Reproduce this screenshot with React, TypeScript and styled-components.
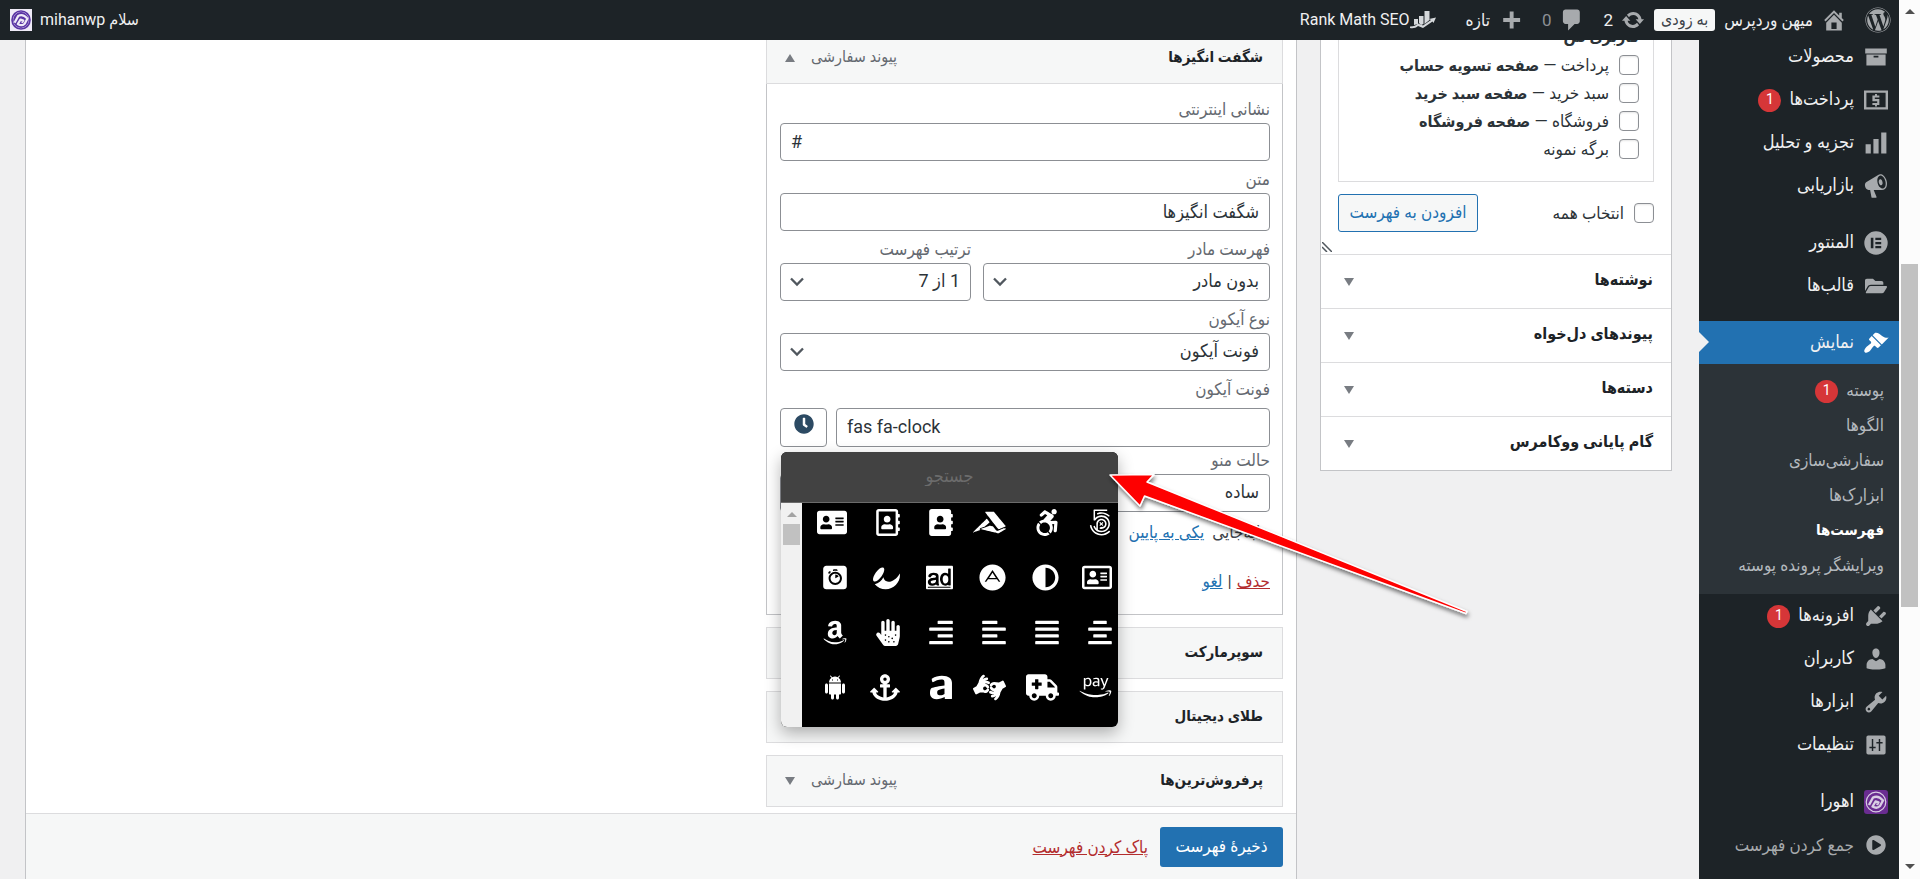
import React from 'react';
import styled, { createGlobalStyle, css } from 'styled-components';
import {
  Fa500Px, FaAccessibleIcon, FaAccusoft, FaAddressBook, FaRegAddressBook, FaAddressCard,
  FaRegAddressCard, FaAdjust, FaAdn, FaAdversal, FaAffiliatetheme, FaAlgolia,
  FaAlignCenter, FaAlignJustify, FaAlignLeft, FaAlignRight, FaAllergies, FaAmazon,
  FaAmazonPay, FaAmbulance, FaAmericanSignLanguageInterpreting, FaAmilia, FaAnchor,
  FaClock, FaFolderOpen, FaPlayCircle, FaWordpress,
} from 'react-icons/fa';

const GlobalStyle = createGlobalStyle`
  *, *::before, *::after { box-sizing: border-box; }
  body {
    margin: 0;
    background: #f0f0f1;
    color: #3c434a;
    font-family: Roboto, 'DejaVu Sans Condensed', sans-serif;
    font-size: 17px;
    line-height: 24px;
  }
  button, input, select { font: inherit; color: inherit; margin: 0; }
  ul { list-style: none; margin: 0; padding: 0; }
  h3, h4, p { margin: 0; font-size: inherit; }
  b { font-size: 16px; }
`;

/* ---------- shell ---------- */

const Shell = styled.div`
  display: flex;
  direction: rtl;
  height: 100vh;
  overflow: hidden;
`;

const Page = styled.div`
  flex: 1;
  min-width: 0;
  display: flex;
  flex-direction: column;
  position: relative;
`;

const Columns = styled.div`
  flex: 1;
  min-height: 0;
  display: flex;
  overflow: hidden;
`;

const Track = styled.div`
  width: 21px;
  flex: none;
  display: flex;
  flex-direction: column;
  align-items: center;
  justify-content: space-between;
  padding: 9px 0 10px;
  background: #fcfcfc;
`;

const Thumb = styled.div`
  width: 17px;
  height: 343px;
  background: #c1c1c1;
`;

const TrackTop = styled.div`
  display: flex;
  flex-direction: column;
  align-items: center;
  gap: 250px;
`;

const Triangle = styled.span<{ $up?: boolean; $color?: string }>`
  width: 0;
  height: 0;
  border: 5px solid transparent;
  ${({ $up, $color = '#787c82' }) => ($up
    ? css`border-top: 0; border-bottom: 8px solid ${$color};`
    : css`border-bottom: 0; border-top: 8px solid ${$color};`)}
`;

const SmallTriangle = styled(Triangle)`
  border-top-width: ${({ $up }) => ($up ? 0 : 5)}px;
  border-bottom-width: ${({ $up }) => ($up ? 5 : 0)}px;
`;

/* ---------- admin bar ---------- */

const Bar = styled.header`
  height: 40px;
  flex: none;
  display: flex;
  align-items: center;
  justify-content: space-between;
  padding: 0 8px 0 10px;
  background: #1d2327;
  color: #f0f0f1;
  z-index: 3;
`;

const BarGroup = styled.nav`
  display: flex;
  align-items: center;
  gap: 18px;
`;

const BarLink = styled.a<{ $muted?: boolean; $gap?: number; $small?: boolean }>`
  display: flex;
  align-items: center;
  gap: ${({ $gap = 8 }) => $gap}px;
  color: ${({ $muted }) => ($muted ? '#8c8f94' : '#f0f0f1')};
  font-size: ${({ $small }) => ($small ? 16 : 17)}px;
  text-decoration: none;
  white-space: nowrap;
  svg { color: #a7aaad; }
`;

const SiteGroup = styled.div`
  display: flex;
  align-items: center;
  gap: 9px;
`;

const Soon = styled.a`
  padding: 0 7px;
  line-height: 22px;
  border-radius: 3px;
  background: #f6f7f7;
  color: #3c434a;
  font-size: 16px;
  text-decoration: none;
`;

/* ---------- side menu ---------- */

const Side = styled.aside`
  width: 200px;
  flex: none;
  overflow: hidden;
  background: #1d2327;
`;

const SideList = styled.ul`
  margin-top: -5px;
`;

const SideGap = styled.li`
  height: 14px;
`;

const SideLink = styled.a<{ $active?: boolean; $muted?: boolean }>`
  position: relative;
  display: flex;
  align-items: center;
  gap: 9px;
  height: 43px;
  padding-right: 10px;
  color: ${({ $muted }) => ($muted ? '#a7aaad' : '#f0f0f1')};
  background: ${({ $active }) => ($active ? '#2271b1' : 'transparent')};
  font-size: ${({ $muted }) => ($muted ? 17 : 18)}px;
  text-decoration: none;
  svg { color: ${({ $active }) => ($active ? '#fff' : '#a7aaad')}; }
  ${({ $active }) => $active && css`
    &::after {
      content: '';
      position: absolute;
      left: 0;
      top: 11px;
      border: 10px solid transparent;
      border-right: 0;
      border-left-color: #f0f0f1;
    }
  `}
`;

const IconSlot = styled.span`
  width: 26px;
  display: flex;
  justify-content: center;
`;

const SideText = styled.span`
  display: flex;
  align-items: center;
  gap: 8px;
  padding-bottom: 2px;
`;

const Badge = styled.span`
  width: 23px;
  height: 23px;
  margin-top: 3px;
  border-radius: 50%;
  background: #d63638;
  color: #fff;
  font-size: 14px;
  line-height: 21px;
  text-align: center;
`;

const SubMenu = styled.ul`
  padding: 8px 0 12px;
  background: #2c3338;
`;

const SubLink = styled.a<{ $current?: boolean }>`
  display: flex;
  align-items: center;
  gap: 8px;
  height: 35px;
  padding-right: 15px;
  color: ${({ $current }) => ($current ? '#fff' : '#b4b9be')};
  font-size: ${({ $current }) => ($current ? 15 : 17)}px;
  font-weight: ${({ $current }) => ($current ? 700 : 400)};
  text-decoration: none;
  white-space: nowrap;
`;

/* ---------- meta boxes ---------- */

const Content = styled.main`
  flex: 1;
  min-width: 0;
  display: flex;
  align-items: stretch;
  gap: 23px;
  padding: 0 27px 0 25px;
`;

const MetaColumn = styled.section`
  width: 352px;
  flex: none;
  align-self: flex-start;
  border: 1px solid #c3c4c7;
  border-top: 0;
  background: #fff;
`;

const PagesPanel = styled.div`
  position: relative;
  height: 214px;
  padding: 0 17px;
`;

const PageList = styled.div`
  height: 142px;
  padding: 0 14px;
  overflow: hidden;
  border: 1px solid #dcdcde;
  border-top: 0;
`;

const PageRows = styled.div`
  margin-top: -17px;
`;

const CheckLabel = styled.label`
  display: flex;
  align-items: center;
  gap: 10px;
  height: 28px;
  color: #2c3338;
  white-space: pre;
`;

const Check = styled.input.attrs({ type: 'checkbox' })`
  appearance: none;
  width: 20px;
  height: 20px;
  flex: none;
  border: 1px solid #8c8f94;
  border-radius: 4px;
  background: #fff;
  box-shadow: inset 0 1px 2px rgba(0, 0, 0, 0.1);
`;

const PageActions = styled.div`
  display: flex;
  align-items: center;
  justify-content: space-between;
  margin-top: 12px;
`;

const OutlineButton = styled.button`
  height: 38px;
  width: 140px;
  padding: 0 0 3px;
  border: 1px solid #2271b1;
  border-radius: 3px;
  background: #f6f7f7;
  color: #2271b1;
`;

const Grip = styled.svg`
  position: absolute;
  left: 1px;
  bottom: 2px;
`;

const Accordion = styled.button`
  display: flex;
  align-items: center;
  justify-content: space-between;
  width: 100%;
  height: 54px;
  padding: 0 18px 3px 23px;
  border: 0;
  border-top: 1px solid #dcdcde;
  background: none;
  color: #1d2327;
  font-size: 16px;
  font-weight: 700;
  > span { margin-top: 4px; }
`;

/* ---------- menu editor ---------- */

const Editor = styled.section`
  flex: 1;
  min-width: 0;
  display: flex;
  flex-direction: column;
  border: 1px solid #c3c4c7;
  border-width: 0 1px;
  background: #fff;
`;

const EditorBody = styled.div`
  flex: 1;
  min-height: 0;
  overflow: hidden;
  padding: 0 13px;
`;

const ItemList = styled.ul`
  width: 517px;
  max-width: 100%;
  margin-top: -8px;
  display: flex;
  flex-direction: column;
  gap: 12px;
`;

const ItemBar = styled.div`
  display: flex;
  align-items: center;
  height: 52px;
  padding: 0 19px 0 18px;
  border: 1px solid #dcdcde;
  background: #f6f7f7;
`;

const ItemTitle = styled.h4`
  flex: 1;
  padding-bottom: 2px;
  color: #1d2327;
  font-size: 15px;
  font-weight: 700;
`;

const ItemType = styled.span`
  margin-left: 16px;
  padding-bottom: 2px;
  color: #646970;
  font-size: 16px;
`;

const Settings = styled.div`
  height: 531px;
  padding: 15px 12px 0 13px;
  border: 1px solid #c3c4c7;
  border-top: 0;
`;

const Field = styled.div<{ $tight?: boolean }>`
  display: flex;
  flex-direction: column;
  margin-bottom: ${({ $tight }) => ($tight ? 3 : 8)}px;
`;

const FieldLabel = styled.label`
  height: 24px;
  line-height: 20px;
  color: #646970;
`;

const controlBox = css`
  width: 100%;
  height: 38px;
  border: 1px solid #8c8f94;
  border-radius: 4px;
  background: #fff;
  color: #2c3338;
  font-size: 18px;
  outline: none;
`;

const TextBox = styled.input<{ $ltr?: boolean }>`
  ${controlBox}
  padding: 0 10px 2px;
  direction: ${({ $ltr }) => ($ltr ? 'ltr' : 'rtl')};
`;

const SelectWrap = styled.div`
  position: relative;
  display: flex;
`;

const Select = styled.select`
  ${controlBox}
  appearance: none;
  padding: 0 10px 2px 32px;
`;

const Chevron = styled.svg`
  position: absolute;
  left: 10px;
  top: 14px;
  pointer-events: none;
`;

const FieldPair = styled.div`
  display: grid;
  grid-template-columns: 287px 1fr;
  gap: 12px;
`;

const IconRow = styled.div`
  position: relative;
  display: grid;
  grid-template-columns: 1fr 47px;
  gap: 9px;
  height: 39px;
  margin-top: 5px;
  > input { height: 39px; }
`;

const IconPreview = styled.button`
  display: flex;
  justify-content: center;
  padding: 5px 0 0;
  border: 1px solid #8c8f94;
  border-radius: 4px;
  background: #fff;
  color: #2c4a63;
`;

const Popover = styled.div`
  position: absolute;
  left: 1px;
  top: 44px;
  z-index: 1;
  width: 337px;
  height: 275px;
  display: flex;
  flex-direction: column;
  overflow: hidden;
  border-radius: 6px;
  background: #000;
  box-shadow: 0 6px 16px rgba(0, 0, 0, 0.3);
`;

const Search = styled.input`
  height: 51px;
  flex: none;
  padding: 0 0 3px;
  border: 0;
  border-bottom: 1px solid #6b6b6b;
  background: #424242;
  text-align: center;
  outline: none;
  color: #ccc;
  font-size: 18px;
  &::placeholder { color: #6c6c6c; opacity: 1; }
`;

const PickerBody = styled.div`
  flex: 1;
  min-height: 0;
  display: flex;
`;

const IconGrid = styled.div`
  flex: 1;
  display: grid;
  grid-template-columns: repeat(6, 53px);
  grid-auto-rows: 55px;
  padding-right: 6px;
  overflow: hidden;
`;

const IconButton = styled.button<{ $width: number }>`
  display: flex;
  align-items: flex-start;
  justify-content: flex-start;
  padding: 6px 0 0;
  border: 0;
  background: none;
  color: #fff;
  svg { width: ${({ $width }) => $width}px; height: 27px; flex: none; }
`;

const PickerTrack = styled.div`
  width: 21px;
  display: flex;
  flex-direction: column;
  align-items: center;
  gap: 7px;
  padding-top: 9px;
  background: #f1f1f1;
`;

const PickerThumb = styled.div`
  width: 17px;
  height: 21px;
  background: #c1c1c1;
`;

const MoveLine = styled.p`
  display: flex;
  gap: 8px;
`;

const Actions = styled.p`
  display: flex;
  gap: 5px;
  margin-top: 25px;
`;

const Anchor = styled.a<{ $danger?: boolean }>`
  color: ${({ $danger }) => ($danger ? '#b32d2e' : '#2271b1')};
`;

const Footer = styled.footer`
  height: 66px;
  flex: none;
  display: flex;
  align-items: center;
  gap: 12px;
  padding: 0 13px;
  border-top: 1px solid #dcdcde;
  background: #f6f7f7;
`;

const Primary = styled.button`
  width: 123px;
  height: 40px;
  padding: 0 0 2px;
  border: 0;
  border-radius: 3px;
  background: #2271b1;
  color: #fff;
`;

const Arrow = styled.svg`
  position: absolute;
  left: 1100px;
  top: 460px;
  z-index: 2;
  pointer-events: none;
  overflow: visible;
`;

/* ---------- icons ---------- */

const Glyph = ({ d, size = 26 }: { d: string; size?: number }) => (
  <svg width={size} height={size} viewBox="0 0 20 20" fill="currentColor" fillRule="evenodd"><path d={d} /></svg>
);

const paths = {
  home: 'M16 8.5l1.53 1.53-1.06 1.06L10 4.6l-6.47 6.49-1.06-1.06L10 2.5l4 4v-2h2v4zm-6-2.46l6 5.99V18H4v-5.97zM12 17v-5H8v5h4z',
  update: 'M10.2 3.28c3.53 0 6.43 2.61 6.92 6h2.08l-3.5 4-3.5-4h2.32c-.45-1.97-2.21-3.45-4.32-3.45-1.45 0-2.73.71-3.54 1.78L4.95 5.66C6.23 4.2 8.11 3.28 10.2 3.28zm-.4 13.44c-3.52 0-6.43-2.61-6.92-6H.8l3.5-4c1.17 1.33 2.33 2.67 3.5 4H5.48c.45 1.97 2.21 3.45 4.32 3.45 1.45 0 2.73-.71 3.54-1.78l1.71 1.95c-1.28 1.46-3.15 2.38-5.25 2.38z',
  comment: 'M5 2h9c1.1 0 2 .9 2 2v7c0 1.1-.9 2-2 2h-2l-5 5v-5H5c-1.1 0-2-.9-2-2V4c0-1.1.9-2 2-2z',
  plus: 'M17 8.5v3h-5v5H9v-5H4v-3h5v-5h3v5z',
  archive: 'M1 3h18v4H1zM2 8h16v9H2zM8 9v1.5h4V9z',
  money: 'M0 2h20v16H0zM2 4v12h16V4zM9.2 5h1.6v1.2h2v1.7H9v1.3h3.8v5H10.8V15.500H9.200V14.200H7v-1.700h4v-1.500H7V6.200h2.200z',
  bars: 'M14 2h4v16h-4zM8 7h4v11H8zM2 11h4v7H2z',
  megaphone: 'M18.15 5.94c.46 1.62.38 3.22-.02 4.48-.42 1.28-1.26 2.18-2.3 2.48-.16.06-.26.06-.4.06-.06.02-.12.02-.18.02-.06.02-.14.02-.22.02h-6.8l2.22 5.5c.02.14-.06.26-.14.34-.08.1-.24.16-.34.16H6.95c-.1 0-.26-.06-.34-.16-.08-.08-.16-.2-.14-.34l-1-5.5H4.25l-.02-.02c-.5.06-1.08-.18-1.54-.62s-.88-1.08-1.06-1.88c-.24-.8-.2-1.56-.02-2.2.18-.62.58-1.08 1.06-1.3l.02-.02 9-5.4c.1-.06.18-.1.24-.16.06-.04.14-.08.24-.12.16-.08.28-.12.5-.18 1.04-.3 2.24.1 3.22.98s1.84 2.24 2.26 3.86zm-2.58 5.98h-.02c.4-.1.74-.34 1.04-.7.58-.7.86-1.76.86-3.04 0-.64-.1-1.3-.28-1.98-.34-1.36-1.02-2.5-1.78-3.24s-1.68-1.1-2.46-.88c-.82.22-1.4.96-1.7 2-.32 1.04-.28 2.36.06 3.72.38 1.36 1 2.5 1.8 3.24.78.74 1.62 1.1 2.48.88zm-2.54-7.08c.22-.04.42-.02.62.04.38.16.76.48 1.02 1s.42 1.2.42 1.78c0 .3-.04.56-.12.8-.18.48-.44.84-.86.94-.34.1-.8-.06-1.14-.4s-.64-.86-.78-1.5c-.18-.62-.12-1.24.02-1.72s.48-.84.82-.94z',
  elementor: 'M10 1a9 9 0 1 0 0 18a9 9 0 1 0 0-18zM6 6h2v8H6zM9.500 6H14v1.700H9.500zM9.500 9.200H14v1.700H9.500zM9.500 12.300H14V14H9.500z',
  brush: 'M14.48 11.06L7.41 3.99l1.5-1.5c.5-.56 2.3-.47 3.51.32 1.21.8 1.43 1.28 2.91 2.1 1.18.64 2.45 1.26 4.45.85zm-.71.71L6.7 4.7 4.93 6.47c-.39.39-.39 1.02 0 1.41l1.06 1.06c.39.39.39 1.03 0 1.42-.6.6-1.43 1.11-2.21 1.69-.35.26-.7.53-1.01.84C1.43 14.23.4 16.08 1.4 17.07c.99 1 2.84-.03 4.18-1.36.31-.31.58-.66.85-1.02.57-.78 1.08-1.61 1.69-2.21.39-.39 1.02-.39 1.41 0l1.06 1.06c.39.39 1.02.39 1.41 0z',
  plug: 'M13.11 4.36L9.87 7.6 8 5.73l3.24-3.24c.35-.34 1.05-.2 1.56.32.52.51.66 1.21.31 1.55zm-8 1.77l.91-1.12 9.01 9.01-1.19.84c-.71.71-2.63 1.16-3.82 1.16H6.14L4.9 17.26c-.59.59-1.54.59-2.12 0-.59-.58-.59-1.53 0-2.12l1.24-1.24v-3.88c0-1.13.4-3.19 1.09-3.89zm7.26 3.97l3.24-3.24c.34-.35 1.04-.21 1.55.31.52.51.66 1.21.31 1.55l-3.24 3.25z',
  user: 'M10 9.25c-2.27 0-2.73-3.44-2.73-3.44C7 4.02 7.82 2 9.97 2c2.16 0 2.98 2.02 2.71 3.81 0 0-.41 3.44-2.68 3.44zm0 2.57L12.72 10c2.39 0 4.52 2.33 4.52 4.53v2.49s-3.65 1.13-7.24 1.13c-3.65 0-7.24-1.13-7.24-1.13v-2.49c0-2.25 1.94-4.48 4.47-4.48z',
  wrench: 'M16.68 9.77c-1.34 1.34-3.3 1.67-4.95.99l-5.41 6.52c-.99.99-2.59.99-3.58 0s-.99-2.59 0-3.57l6.52-5.42c-.68-1.65-.35-3.61.99-4.95 1.28-1.28 3.12-1.62 4.72-1.06l-2.89 2.89 2.82 2.82 2.86-2.87c.53 1.58.18 3.39-1.08 4.65zM3.81 16.21c.4.39 1.04.39 1.43 0 .4-.4.4-1.04 0-1.43-.39-.4-1.03-.4-1.43 0-.39.39-.39 1.03 0 1.43z',
  sliders: 'M2 3.500A1.500 1.500 0 0 1 3.500 2h13A1.500 1.500 0 0 1 18 3.500v13a1.500 1.500 0 0 1-1.500 1.500h-13A1.500 1.500 0 0 1 2 16.500zM6.500 5v6.500H4.500v1.300h2V15h1.200v-2.200h2v-1.300h-2V5zM12.300 15V8.800h-2V7.500h2V5h1.200v2.500h2v1.300h-2V15z',
};

const Robot = () => (
  <svg viewBox="0 0 24 24" fill="currentColor">
    <path d="M6 18c0 .55.45 1 1 1h1v3.500c0 .83.67 1.500 1.500 1.500s1.500-.67 1.500-1.500V19h2v3.500c0 .83.67 1.500 1.500 1.500s1.500-.67 1.500-1.500V19h1c.55 0 1-.45 1-1V8H6v10zM3.500 8C2.670 8 2 8.670 2 9.500v7c0 .83.67 1.500 1.500 1.500S5 17.330 5 16.500v-7C5 8.670 4.330 8 3.500 8zm17 0c-.83 0-1.500.67-1.500 1.500v7c0 .83.67 1.500 1.500 1.500s1.500-.67 1.500-1.500v-7c0-.83-.67-1.500-1.500-1.500zm-4.970-5.840l1.300-1.300c.2-.2.2-.51 0-.71-.2-.2-.51-.2-.71 0l-1.480 1.480C13.850 1.230 12.950 1 12 1c-.96 0-1.860.23-2.660.63L7.850.15c-.2-.2-.51-.2-.71 0-.2.2-.2.51 0 .71l1.310 1.310C6.970 3.260 6 5.010 6 7h12c0-1.990-.97-3.750-2.470-4.840zM10 5H9V4h1v1zm5 0h-1V4h1v1z" />
  </svg>
);

const MihanLogo = ({ size, dark }: { size: number; dark?: boolean }) => {
  const bg = dark ? '#6a2c91' : '#efeaf7';
  const fg = dark ? '#d9cfe4' : '#5b35a5';
  return (
    <svg width={size} height={size} viewBox="0 0 24 24" fill="none">
      <rect width="24" height="24" rx={dark ? 3 : 0} fill={bg} />
      <circle cx="12" cy="12" r="9.800" stroke={fg} strokeWidth={dark ? 1.2 : 1.8} />
      {!dark && <circle cx="12" cy="12" r="8.600" fill={fg} />}
      <path
        d="M5 15L9 7.500C12 6 16 7 19 10.500L16 16C14 18 11 18 8.500 16.500L11.500 11.500L14.500 12.500L13 15"
        stroke={dark ? fg : bg}
        strokeWidth="2.400"
        strokeLinejoin="round"
      />
    </svg>
  );
};

const RankMathIcon = styled.svg`
  margin-right: 12px;
`;

const RankMath = () => (
  <RankMathIcon width="26" height="20" viewBox="0 0 26 20" fill="#d5d8db">
    <path d="M4 9h4v5l-4 1zM9 6h4.500v8L11 15l-2-2zM14.500 1h5v9l-5 4z" />
    <path d="M0 16.500c4 0 6-1 8-3l5 2 8-5.500-2-1 7-1.500-2.500 5.500-1-1.500-9.500 6.500-5-2c-2 2-5 2.500-8 2z" />
  </RankMathIcon>
);

const DownChevron = () => (
  <Chevron width="14" height="10" viewBox="0 0 14 10" fill="none" stroke="#50575e" strokeWidth="2.300">
    <path d="M1 1.500l6 6 6-6" />
  </Chevron>
);

/* ---------- data ---------- */

type SideEntry = { text: string; icon: React.ReactNode; badge?: string };

const topMenu: SideEntry[][] = [
  [
    { text: 'محصولات', icon: <Glyph d={paths.archive} size={24} /> },
    { text: 'پرداخت‌ها', icon: <Glyph d={paths.money} size={24} />, badge: '1' },
    { text: 'تجزیه و تحلیل', icon: <Glyph d={paths.bars} /> },
    { text: 'بازاریابی', icon: <Glyph d={paths.megaphone} /> },
  ],
  [
    { text: 'المنتور', icon: <Glyph d={paths.elementor} /> },
    { text: 'قالب‌ها', icon: <FaFolderOpen size={22} /> },
  ],
];

const subMenu = [
  { text: 'پوسته', badge: '1' },
  { text: 'الگوها' },
  { text: 'سفارشی‌سازی' },
  { text: 'ابزارک‌ها' },
  { text: 'فهرست‌ها', current: true },
  { text: 'ویرایشگر پرونده پوسته' },
];

const lowerMenu: SideEntry[] = [
  { text: 'افزونه‌ها', icon: <Glyph d={paths.plug} />, badge: '1' },
  { text: 'کاربران', icon: <Glyph d={paths.user} /> },
  { text: 'ابزارها', icon: <Glyph d={paths.wrench} /> },
  { text: 'تنظیمات', icon: <Glyph d={paths.sliders} size={24} /> },
];

const pages = [
  { name: 'پرداخت', role: 'صفحه تسویه حساب' },
  { name: 'سبد خرید', role: 'صفحه سبد خرید' },
  { name: 'فروشگاه', role: 'صفحه فروشگاه' },
  { name: 'برگه نمونه' },
];

const sources = ['نوشته‌ها', 'پیوندهای دل‌خواه', 'دسته‌ها', 'گام پایانی ووکامرس'];
const closedItems = ['سوپرمارکت', 'طلای دیجیتال', 'پرفروش‌ترین‌ها'];

/* each glyph with its advance width at the picker's size */
const fontIcons: [React.ComponentType, string, number][] = [
  [Fa500Px, '500px', 24],
  [FaAccessibleIcon, 'accessible-icon', 24],
  [FaAccusoft, 'accusoft', 33],
  [FaAddressBook, 'address-book', 24],
  [FaRegAddressBook, 'address-book outline', 24],
  [FaAddressCard, 'address-card', 30],
  [FaRegAddressCard, 'address-card outline', 30],
  [FaAdjust, 'adjust', 27],
  [FaAdn, 'adn', 27],
  [FaAdversal, 'adversal', 27],
  [FaAffiliatetheme, 'affiliatetheme', 27],
  [FaAlgolia, 'algolia', 24],
  [FaAlignCenter, 'align-center', 24],
  [FaAlignJustify, 'align-justify', 24],
  [FaAlignLeft, 'align-left', 24],
  [FaAlignRight, 'align-right', 24],
  [FaAllergies, 'allergies', 24],
  [FaAmazon, 'amazon', 24],
  [FaAmazonPay, 'amazon-pay', 33],
  [FaAmbulance, 'ambulance', 33],
  [FaAmericanSignLanguageInterpreting, 'asl-interpreting', 33],
  [FaAmilia, 'amilia', 24],
  [FaAnchor, 'anchor', 30],
  [Robot, 'android', 24],
];

/* ---------- parts ---------- */

const SideItem = ({ text, icon, badge }: SideEntry) => (
  <li>
    <SideLink href="#">
      <IconSlot>{icon}</IconSlot>
      <SideText>{text}{badge && <Badge>{badge}</Badge>}</SideText>
    </SideLink>
  </li>
);

const SelectField = ({ id, label, value }: { id: string; label: string; value: string }) => (
  <Field>
    <FieldLabel htmlFor={id}>{label}</FieldLabel>
    <SelectWrap>
      <Select id={id}><option>{value}</option></Select>
      <DownChevron />
    </SelectWrap>
  </Field>
);

const MenuBar = ({ title, open }: { title: string; open?: boolean }) => (
  <ItemBar>
    <ItemTitle>{title}</ItemTitle>
    <ItemType>پیوند سفارشی</ItemType>
    <Triangle $up={open} />
  </ItemBar>
);

const IconPicker = () => (
  <Popover>
    <Search aria-label="جستجو" placeholder="جستجو" />
    <PickerBody>
      <IconGrid>
        {fontIcons.map(([Icon, name, width]) => (
          <IconButton key={name} type="button" aria-label={name} $width={width}><Icon /></IconButton>
        ))}
      </IconGrid>
      <PickerTrack>
        <SmallTriangle $up $color="#a3a3a3" />
        <PickerThumb />
      </PickerTrack>
    </PickerBody>
  </Popover>
);

export default function App() {
  return (
    <>
      <GlobalStyle />
      <Shell>
        <Track>
          <TrackTop>
            <SmallTriangle $up $color="#505050" />
            <Thumb />
          </TrackTop>
          <SmallTriangle $color="#505050" />
        </Track>
        <Page>
          <Bar>
            <BarGroup>
              <BarLink href="#" aria-label="WordPress"><FaWordpress size={26} /></BarLink>
              <SiteGroup>
                <BarLink href="#"><Glyph d={paths.home} />میهن وردپرس</BarLink>
                <Soon href="#">به زودی</Soon>
                <BarLink href="#"><Glyph d={paths.update} size={24} />2</BarLink>
              </SiteGroup>
              <BarLink href="#" $muted><Glyph d={paths.comment} />0</BarLink>
              <BarLink href="#"><Glyph d={paths.plus} />تازه</BarLink>
              <BarLink href="#" $gap={0} $small><RankMath />Rank Math SEO</BarLink>
            </BarGroup>
            <BarLink href="#" $small>سلام mihanwp<MihanLogo size={22} /></BarLink>
          </Bar>
          <Columns>
            <Side>
              <SideList>
                {topMenu.map((group, i) => (
                  <React.Fragment key={i}>
                    {group.map((entry) => <SideItem key={entry.text} {...entry} />)}
                    <SideGap />
                  </React.Fragment>
                ))}
                <li>
                  <SideLink href="#" $active>
                    <IconSlot><Glyph d={paths.brush} /></IconSlot>
                    <SideText>نمایش</SideText>
                  </SideLink>
                  <SubMenu>
                    {subMenu.map((s) => (
                      <li key={s.text}>
                        <SubLink href="#" $current={s.current}>
                          {s.text}{s.badge && <Badge>{s.badge}</Badge>}
                        </SubLink>
                      </li>
                    ))}
                  </SubMenu>
                </li>
                {lowerMenu.map((entry) => <SideItem key={entry.text} {...entry} />)}
                <SideGap />
                <SideItem text="اهورا" icon={<MihanLogo size={24} dark />} />
                <li>
                  <SideLink href="#" $muted>
                    <IconSlot><FaPlayCircle size={20} /></IconSlot>
                    <span>جمع کردن فهرست</span>
                  </SideLink>
                </li>
              </SideList>
            </Side>

            <Content>
              <MetaColumn>
                <PagesPanel>
                  <PageList>
                    <PageRows>
                      <CheckLabel as="div"><b>کاربری من</b></CheckLabel>
                      {pages.map((p) => (
                        <CheckLabel key={p.name}>
                          <Check />
                          <span>{p.name}{p.role && <> — <b>{p.role}</b></>}</span>
                        </CheckLabel>
                      ))}
                    </PageRows>
                  </PageList>
                  <PageActions>
                    <CheckLabel><Check />انتخاب همه</CheckLabel>
                    <OutlineButton type="button">افزودن به فهرست</OutlineButton>
                  </PageActions>
                  <Grip width="10" height="10" viewBox="0 0 10 10" stroke="#50575e" strokeWidth="1.500">
                    <path d="M0 0l10 10M0 5l5 5" />
                  </Grip>
                </PagesPanel>
                {sources.map((s) => (
                  <Accordion key={s} type="button">{s}<Triangle /></Accordion>
                ))}
              </MetaColumn>

              <Editor>
                <EditorBody>
                  <ItemList>
                    <li>
                      <MenuBar title="شگفت انگیزها" open />
                      <Settings>
                        <Field>
                          <FieldLabel htmlFor="url">نشانی اینترنتی</FieldLabel>
                          <TextBox id="url" $ltr defaultValue="#" />
                        </Field>
                        <Field>
                          <FieldLabel htmlFor="title">متن</FieldLabel>
                          <TextBox id="title" defaultValue="شگفت انگیزها" />
                        </Field>
                        <FieldPair>
                          <SelectField id="parent" label="فهرست مادر" value="بدون مادر" />
                          <SelectField id="order" label="ترتیب فهرست" value="1 از 7" />
                        </FieldPair>
                        <SelectField id="kind" label="نوع آیکون" value="فونت آیکون" />
                        <Field $tight>
                          <FieldLabel htmlFor="icon">فونت آیکون</FieldLabel>
                          <IconRow>
                            <TextBox id="icon" $ltr defaultValue="fas fa-clock" />
                            <IconPreview type="button" aria-label="fas fa-clock"><FaClock size={20} /></IconPreview>
                            <IconPicker />
                          </IconRow>
                        </Field>
                        <SelectField id="mode" label="حالت منو" value="ساده" />
                        <MoveLine>جابه‌جایی <Anchor href="#">یکی به پایین</Anchor></MoveLine>
                        <Actions>
                          <Anchor href="#" $danger>حذف</Anchor>|<Anchor href="#">لغو</Anchor>
                        </Actions>
                      </Settings>
                    </li>
                    {closedItems.map((t) => <li key={t}><MenuBar title={t} /></li>)}
                  </ItemList>
                </EditorBody>
                <Footer>
                  <Primary type="button">ذخیرهٔ فهرست</Primary>
                  <Anchor href="#" $danger>پاک کردن فهرست</Anchor>
                </Footer>
              </Editor>
            </Content>
          </Columns>
          <Arrow width="370" height="160" viewBox="1100 460 370 160">
            <defs>
              <filter id="lift" x="-10%" y="-10%" width="120%" height="130%">
                <feDropShadow dx="1" dy="3" stdDeviation="2" floodOpacity="0.55" />
              </filter>
            </defs>
            <path
              d="M1110 475L1154 474.500L1147 482L1467 611.500L1466 613.500L1144.500 496L1140 506Z"
              fill="#fe0000" stroke="#fff" strokeWidth="1.500" strokeLinejoin="round" filter="url(#lift)"
            />
          </Arrow>
        </Page>
      </Shell>
    </>
  );
}
